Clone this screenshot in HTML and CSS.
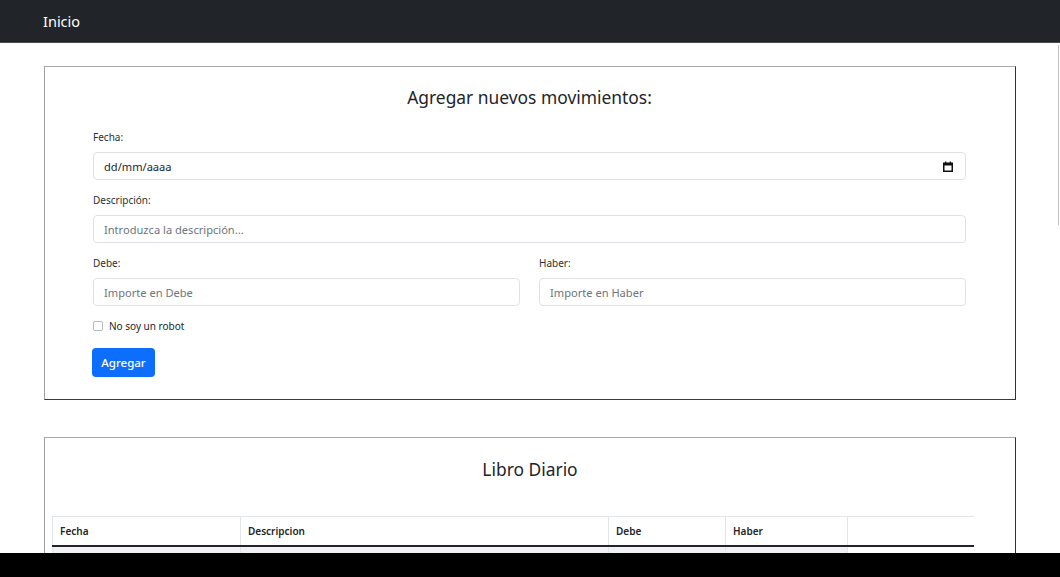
FILE: index.html
```html
<!DOCTYPE html>
<html lang="es">
<head>
<meta charset="utf-8">
<title>Libro Diario</title>
<link rel="stylesheet" href="styles.css">
</head>
<body>
<nav class="navbar"><a class="brand" href="#">Inicio</a></nav>
<main class="container">
  <section class="card form-card">
    <h2 class="card-title">Agregar nuevos movimientos:</h2>
    <form class="form">
      <label class="label">Fecha:</label>
      <div class="input date-input">
        <span class="date-text">dd/mm/aaaa</span>
        <svg class="cal" width="10" height="11" viewBox="0 0 10 11"><rect x="0.75" y="2.25" width="8.5" height="8" fill="none" stroke="#111" stroke-width="1.5"/><rect x="0.5" y="2" width="9" height="2.5" fill="#111"/><rect x="2" y="0.5" width="1.3" height="2" fill="#111"/><rect x="6.7" y="0.5" width="1.3" height="2" fill="#111"/></svg>
      </div>
      <label class="label">Descripción:</label>
      <input class="input" type="text" placeholder="Introduzca la descripción...">
      <div class="row">
        <div class="col">
          <label class="label">Debe:</label>
          <input class="input" type="text" placeholder="Importe en Debe">
        </div>
        <div class="col">
          <label class="label">Haber:</label>
          <input class="input" type="text" placeholder="Importe en Haber">
        </div>
      </div>
      <div class="check"><span class="box"></span><span>No soy un robot</span></div>
      <button class="btn" type="button">Agregar</button>
    </form>
  </section>
  <section class="card table-card">
    <h2 class="card-title">Libro Diario</h2>
    <table class="table">
      <colgroup><col class="c1"><col class="c2"><col class="c3"><col class="c4"><col class="c5"></colgroup>
      <thead>
        <tr><th>Fecha</th><th>Descripcion</th><th>Debe</th><th>Haber</th><th class="last"></th></tr>
      </thead>
      <tbody>
        <tr class="striped"><td>&nbsp;</td><td></td><td></td><td></td></tr>
        <tr><td>&nbsp;</td><td></td><td></td><td></td></tr>
      </tbody>
    </table>
  </section>
</main>
<div class="scroll-line"></div>
<div class="bottom-bar"></div>
</body>
</html>
```
FILE: styles.css
```css
html { overflow: hidden; }
body {
  margin: 0;
  font-family: "Noto Sans", "Open Sans", sans-serif;
  color: #212529;
  background: #fff;
}
.navbar {
  height: 43px;
  background: #212529;
  display: flex;
  align-items: center;
  padding-left: 43px;
  border-bottom: 1px solid #4a4a4a;
  box-sizing: border-box;
}
.brand {
  color: #fff;
  text-decoration: none;
  font-size: 14.5px;
}
.container {
  padding: 23px 44px 0 44px;
}
.card {
  border-style: solid;
  border-width: 1px;
  border-color: #a9a9a9 #333 #3a3a3a #a0a0a0;
}
.form-card {
  padding: 18px 49px 22px 48px;
}
.card-title {
  margin: 0;
  text-align: center;
  font-weight: 400;
  font-size: 17.4px;
  line-height: 24px;
  color: #212529;
}
.form { margin-top: 20px; display: flex; flex-direction: column; }
.label {
  display: block;
  font-size: 10px;
  line-height: 16px;
  margin-bottom: 7px;
  color: #2b2f33;
}
.input {
  box-sizing: border-box;
  height: 28px;
  width: 100%;
  border: 1px solid #dee2e6;
  border-radius: 4px;
  padding: 0 10px;
  font-family: inherit;
  font-size: 11.1px;
  color: #212529;
  margin: 0 0 12px 0;
  outline: none;
}
.input::placeholder { color: #6c757d; }
.date-input {
  display: flex;
  align-items: center;
  justify-content: space-between;
  padding-right: 12px;
}
.date-text { font-size: 11.1px; }
.cal { display: block; }
.row { display: flex; gap: 19px; }
.col { flex: 1; }
.check {
  display: flex;
  align-items: center;
  gap: 6px;
  font-size: 10px;
  line-height: 16px;
  margin-bottom: 14px;
}
.box {
  width: 10px;
  height: 10px;
  box-sizing: border-box;
  border: 1px solid #b8bcc0;
  border-radius: 2px;
}
.btn {
  align-self: flex-start;
  width: 63px;
  height: 29px;
  margin-left: -1px;
  background: #0d6efd;
  color: #fff;
  border: none;
  border-radius: 4px;
  font-family: inherit;
  font-size: 11.5px;
  font-weight: 500;
  padding: 0;
}
.table-card {
  margin-top: 37px;
  padding: 19px 7px 40px 7px;
}
.table-card .card-title { margin-bottom: 35px; }
.table {
  border-collapse: collapse;
  table-layout: fixed;
  width: 921px;
  font-size: 10px;
}
.table th {
  text-align: left;
  font-weight: 600;
  height: 28px;
  padding: 0 7px;
  border: 1px solid #e3e6e9;
  border-bottom: 2px solid #212529;
}
.table th.last { border-right: none; }
.table td {
  height: 28px;
  padding: 0 7px;
  border-left: 1px solid #e3e6e9;
  border-right: 1px solid #e3e6e9;
}
.c1 { width: 188px; }
.c2 { width: 368px; }
.c3 { width: 117px; }
.c4 { width: 122px; }
.c5 { width: 126px; }
.striped td { background: #f2f2f2; }
.scroll-line {
  position: fixed;
  left: 1058px;
  top: 45px;
  width: 1px;
  height: 180px;
  background: #c0c0c0;
}
.bottom-bar {
  position: fixed;
  left: 0;
  right: 0;
  bottom: 0;
  height: 24px;
  background: #000;
}
```
